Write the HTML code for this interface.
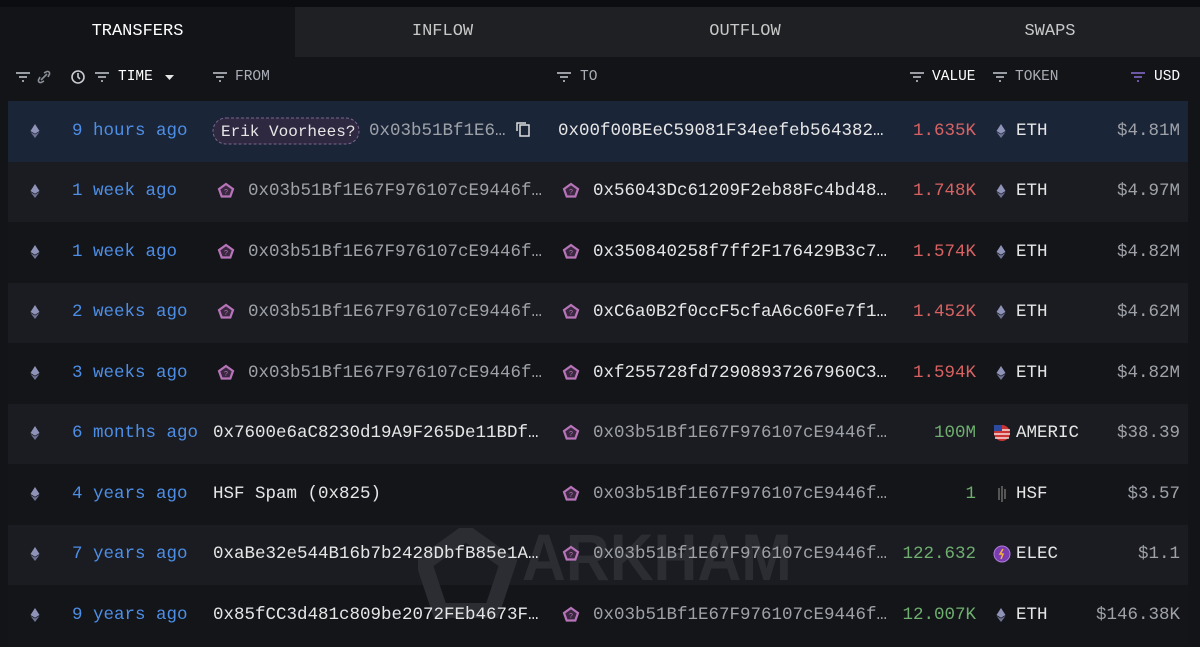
<!DOCTYPE html>
<html><head><style>
*{margin:0;padding:0;box-sizing:border-box}
body{width:1200px;height:647px;background:#121418;font-family:"Liberation Mono",monospace;color:#e6e6e6;position:relative;overflow:hidden}
.abs{position:absolute}
.top{left:0;top:0;width:1200px;height:7px;background:#0b0d11}
.tab{top:7px;height:50px;background:#1e2024;color:#c8c8c8;font-size:17px;line-height:50px;text-align:center}
.hdr{top:68px;font-size:14.5px;color:#a9adb5;line-height:18px;white-space:nowrap}
.row{left:8px;width:1180px;height:60.5px}
.t{font-size:17.5px;line-height:20px;white-space:nowrap}
.blue{color:#4d8ee6}
.gray{color:#9ea2a8}
.red{color:#d86262}
.green{color:#6fae6f}
</style></head><body>
<div class="abs top"></div>
<div class="abs tab" style="left:0;width:275px;background:#121418;color:#fff">TRANSFERS</div>
<div class="abs tab" style="left:295px;width:295px">INFLOW</div>
<div class="abs tab" style="left:590px;width:310px">OUTFLOW</div>
<div class="abs tab" style="left:900px;width:300px">SWAPS</div>
<div class="abs" style="left:275px;top:7px;width:20px;height:50px;background:#121418"></div>

<svg class="abs" style="left:0;top:60px" width="1200" height="35">
<g stroke="#c8ccd2" stroke-width="1.6" fill="none">
<path d="M16 13h14M19 17h8M22 21h2"/>
<path d="M73 13h14M76 17h8M79 21h2" transform="translate(22,0)"/>
<path d="M213 13h14M216 17h8M219 21h2"/>
<path d="M557 13h14M560 17h8M563 21h2"/>
<path d="M910 13h14M913 17h8M916 21h2"/>
<path d="M993 13h14M996 17h8M999 21h2"/>
<circle cx="78" cy="17" r="6"/><path d="M78 13v4l2 2"/>
<path d="M41 20l6-6M40 17l-1 2a2 2 0 003 3l2-1M48 17l1-2a2 2 0 00-3-3l-2 1" stroke="#8a8e96"/>
</g>
<path d="M1131 13h14M1134 17h8M1137 21h2" stroke="#8b6fd6" stroke-width="1.6"/>
<path d="M165 15h9l-4.5 5z" fill="#e6e6e6"/>
</svg>
<div class="abs hdr" style="left:118px;color:#fff">TIME</div>
<div class="abs hdr" style="left:235px">FROM</div>
<div class="abs hdr" style="left:580px">TO</div>
<div class="abs hdr" style="left:932px;color:#fff">VALUE</div>
<div class="abs hdr" style="left:1015px">TOKEN</div>
<div class="abs hdr" style="left:1154px;color:#fff">USD</div>

<div class="abs row" style="top:101px;background:#1b2538"></div>
<div class="abs row" style="top:161.5px;background:#1a1c21"></div>
<div class="abs row" style="top:222px;background:#131519"></div>
<div class="abs row" style="top:282.5px;background:#1a1c21"></div>
<div class="abs row" style="top:343px;background:#131519"></div>
<div class="abs row" style="top:403.5px;background:#1a1c21"></div>
<div class="abs row" style="top:464px;background:#131519"></div>
<div class="abs row" style="top:524.5px;background:#1a1c21"></div>
<div class="abs row" style="top:585px;background:#131519"></div>

<svg class="abs" style="left:418px;top:528px" width="100" height="90"><path d="M48 5l42 30-16 48H22L6 35z" fill="none" stroke="#2b2d33" stroke-width="16"/></svg>
<div class="abs" style="left:522px;top:522px;font-family:'Liberation Sans',sans-serif;font-weight:bold;font-size:66px;line-height:70px;color:#2b2d33;transform:scaleX(0.92);transform-origin:left">ARKHAM</div>

<svg class="abs" style="left:0;top:0" width="1200" height="647">
<defs>
<g id="eth"><path d="M0-7l-4.5 7 4.5 2.7 4.5-2.7z" fill="#8f93b8"/><path d="M0 3.5l-4.5-2.5 4.5 6 4.5-6z" fill="#6f7396"/></g>
<g id="pg"><path d="M0-7l7 5-2.7 7.5h-8.6l-2.7-7.5z" fill="#3a2740" stroke="#b774b8" stroke-width="2.2"/><text x="0" y="3" font-size="7" fill="#b774b8" text-anchor="middle" font-family="Liberation Sans">?</text></g>
</defs>
<use href="#eth" x="35" y="131"/><use href="#eth" x="35" y="191"/><use href="#eth" x="35" y="252"/><use href="#eth" x="35" y="312"/><use href="#eth" x="35" y="373"/><use href="#eth" x="35" y="433"/><use href="#eth" x="35" y="494"/><use href="#eth" x="35" y="554"/><use href="#eth" x="35" y="615"/>
<use href="#eth" x="1001" y="131"/><use href="#eth" x="1001" y="191"/><use href="#eth" x="1001" y="252"/><use href="#eth" x="1001" y="312"/><use href="#eth" x="1001" y="373"/><use href="#eth" x="1001" y="615"/>
<use href="#pg" x="226" y="191"/><use href="#pg" x="226" y="252"/><use href="#pg" x="226" y="312"/><use href="#pg" x="226" y="373"/>
<use href="#pg" x="571" y="191"/><use href="#pg" x="571" y="252"/><use href="#pg" x="571" y="312"/><use href="#pg" x="571" y="373"/><use href="#pg" x="571" y="433"/><use href="#pg" x="571" y="494"/><use href="#pg" x="571" y="554"/><use href="#pg" x="571" y="615"/>
<rect x="213" y="118" width="146" height="26" rx="13" fill="#2e2840" stroke="#7a6690" stroke-dasharray="3 2"/>
<rect x="520" y="125" width="9" height="11" fill="none" stroke="#ddd" stroke-width="1.5"/><path d="M517 131v-8h9" fill="none" stroke="#ddd" stroke-width="1.5"/>
<circle cx="1002" cy="433" r="8" fill="#c33"/><path d="M994 430h16M994 434h16M995 438h14" stroke="#fff" stroke-width="1.3"/><rect x="994" y="425" width="8" height="6" fill="#2b4aa0"/>
<path d="M999 488v12M1002 486v16M1005 489v10" stroke="#555" stroke-width="2"/>
<circle cx="1002" cy="554" r="8" fill="#7a3cb0" stroke="#b07ad8"/><path d="M1003 549l-3 5h3l-2 5" stroke="#f3b13c" stroke-width="1.5" fill="none"/>
</svg>

<div class="abs t blue" style="left:72px;top:121px">9 hours ago</div>
<div class="abs t" style="left:221px;top:122px;font-size:16px">Erik Voorhees?</div>
<div class="abs t gray" style="left:369px;top:121px">0x03b51Bf1E6…</div>
<div class="abs t" style="left:558px;top:121px">0x00f00BEeC59081F34eefeb564382…</div>
<div class="abs t red" style="left:880px;width:96px;text-align:right;top:121px">1.635K</div>
<div class="abs t" style="left:1016px;top:121px">ETH</div>
<div class="abs t gray" style="left:1060px;width:120px;text-align:right;top:121px">$4.81M</div>

<div class="abs t blue" style="left:72px;top:181px">1 week ago</div>
<div class="abs t gray" style="left:248px;top:181px">0x03b51Bf1E67F976107cE9446f…</div>
<div class="abs t" style="left:593px;top:181px">0x56043Dc61209F2eb88Fc4bd48…</div>
<div class="abs t red" style="left:880px;width:96px;text-align:right;top:181px">1.748K</div>
<div class="abs t" style="left:1016px;top:181px">ETH</div>
<div class="abs t gray" style="left:1060px;width:120px;text-align:right;top:181px">$4.97M</div>

<div class="abs t blue" style="left:72px;top:242px">1 week ago</div>
<div class="abs t gray" style="left:248px;top:242px">0x03b51Bf1E67F976107cE9446f…</div>
<div class="abs t" style="left:593px;top:242px">0x350840258f7ff2F176429B3c7…</div>
<div class="abs t red" style="left:880px;width:96px;text-align:right;top:242px">1.574K</div>
<div class="abs t" style="left:1016px;top:242px">ETH</div>
<div class="abs t gray" style="left:1060px;width:120px;text-align:right;top:242px">$4.82M</div>

<div class="abs t blue" style="left:72px;top:302px">2 weeks ago</div>
<div class="abs t gray" style="left:248px;top:302px">0x03b51Bf1E67F976107cE9446f…</div>
<div class="abs t" style="left:593px;top:302px">0xC6a0B2f0ccF5cfaA6c60Fe7f1…</div>
<div class="abs t red" style="left:880px;width:96px;text-align:right;top:302px">1.452K</div>
<div class="abs t" style="left:1016px;top:302px">ETH</div>
<div class="abs t gray" style="left:1060px;width:120px;text-align:right;top:302px">$4.62M</div>

<div class="abs t blue" style="left:72px;top:363px">3 weeks ago</div>
<div class="abs t gray" style="left:248px;top:363px">0x03b51Bf1E67F976107cE9446f…</div>
<div class="abs t" style="left:593px;top:363px">0xf255728fd72908937267960C3…</div>
<div class="abs t red" style="left:880px;width:96px;text-align:right;top:363px">1.594K</div>
<div class="abs t" style="left:1016px;top:363px">ETH</div>
<div class="abs t gray" style="left:1060px;width:120px;text-align:right;top:363px">$4.82M</div>

<div class="abs t blue" style="left:72px;top:423px">6 months ago</div>
<div class="abs t" style="left:213px;top:423px">0x7600e6aC8230d19A9F265De11BDf…</div>
<div class="abs t gray" style="left:593px;top:423px">0x03b51Bf1E67F976107cE9446f…</div>
<div class="abs t green" style="left:880px;width:96px;text-align:right;top:423px">100M</div>
<div class="abs t" style="left:1016px;top:423px">AMERIC</div>
<div class="abs t gray" style="left:1060px;width:120px;text-align:right;top:423px">$38.39</div>

<div class="abs t blue" style="left:72px;top:484px">4 years ago</div>
<div class="abs t" style="left:213px;top:484px">HSF Spam (0x825)</div>
<div class="abs t gray" style="left:593px;top:484px">0x03b51Bf1E67F976107cE9446f…</div>
<div class="abs t green" style="left:880px;width:96px;text-align:right;top:484px">1</div>
<div class="abs t" style="left:1016px;top:484px">HSF</div>
<div class="abs t gray" style="left:1060px;width:120px;text-align:right;top:484px">$3.57</div>

<div class="abs t blue" style="left:72px;top:544px">7 years ago</div>
<div class="abs t" style="left:213px;top:544px">0xaBe32e544B16b7b2428DbfB85e1A…</div>
<div class="abs t gray" style="left:593px;top:544px">0x03b51Bf1E67F976107cE9446f…</div>
<div class="abs t green" style="left:880px;width:96px;text-align:right;top:544px">122.632</div>
<div class="abs t" style="left:1016px;top:544px">ELEC</div>
<div class="abs t gray" style="left:1060px;width:120px;text-align:right;top:544px">$1.1</div>

<div class="abs t blue" style="left:72px;top:605px">9 years ago</div>
<div class="abs t" style="left:213px;top:605px">0x85fCC3d481c809be2072FEb4673F…</div>
<div class="abs t gray" style="left:593px;top:605px">0x03b51Bf1E67F976107cE9446f…</div>
<div class="abs t green" style="left:880px;width:96px;text-align:right;top:605px">12.007K</div>
<div class="abs t" style="left:1016px;top:605px">ETH</div>
<div class="abs t gray" style="left:1060px;width:120px;text-align:right;top:605px">$146.38K</div>
</body></html>
